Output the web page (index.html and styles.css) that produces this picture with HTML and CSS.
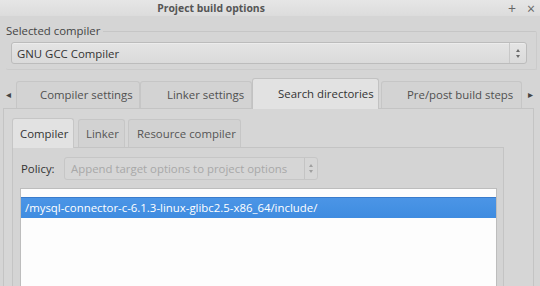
FILE: index.html
```html
<!DOCTYPE html>
<html lang="en">

<head>
  <meta charset="UTF-8" />
  <title>Project build options</title>
  <link rel="stylesheet" href="styles.css">
</head>

<body>
  <div class="window">
    <div class="titlebar">
      <span class="title">Project build options</span>
      <span class="wbtns"><span class="wbtn">+</span><span class="wbtn">×</span></span>
    </div>

    <div class="group">
      <div class="group-label">Selected compiler</div>
      <div class="combo main-combo">
        <span class="combo-text">GNU GCC Compiler</span>
        <span class="spin"><i class="up"></i><i class="down"></i></span>
      </div>
    </div>

    <div class="tabbar">
      <span class="scroll-arrow">◂</span>
      <div class="tab t1">Compiler settings</div>
      <div class="tab t2">Linker settings</div>
      <div class="tab t3 active">Search directories</div>
      <div class="tab t4">Pre/post build steps</div>
      <span class="scroll-arrow">▸</span>
    </div>

    <div class="pane">
      <div class="subtabs">
        <div class="subtab s1 active">Compiler</div>
        <div class="subtab s2">Linker</div>
        <div class="subtab s3">Resource compiler</div>
      </div>
      <div class="subpane">
        <div class="policy">
          <span class="policy-label">Policy:</span>
          <div class="combo disabled">
            <span class="combo-text">Append target options to project options</span>
            <span class="spin"><i class="up"></i><i class="down"></i></span>
          </div>
        </div>
        <div class="list">
          <div class="row selected">/mysql-connector-c-6.1.3-linux-glibc2.5-x86_64/include/</div>
        </div>
      </div>
    </div>
  </div>
</body>

</html>
```

FILE: styles.css
```css
body {
  margin: 0;
  background: #d5d5d5;
  font-family: 'Open Sans', 'Noto Sans', sans-serif;
  font-size: 11.4px;
  color: #3c3c3c;
  overflow: hidden;
}

.window {
  width: 540px;
  height: 286px;
  overflow: hidden;
}

.titlebar {
  height: 16px;
  background: linear-gradient(#e6e6e6, #dcdcdc);
  position: relative;
  text-align: center;
}

.title {
  display: inline-block;
  margin-left: -118px;
  font-weight: bold;
  font-size: 10.4px;
  color: #555;
  line-height: 14px;
}

.wbtns {
  position: absolute;
  right: 5px;
  top: -1px;
  display: flex;
  gap: 11px;
  color: #666;
  font-size: 14px;
}

.group {
  margin: 6px 3px 0 6px;
  position: relative;
  height: 48px;
}

.group::before {
  content: '';
  position: absolute;
  left: 0;
  right: 0;
  top: 9px;
  bottom: 0;
  border: 1px solid #cbcbcb;
  border-top-color: #c6c6c6;
  border-left: none;
  border-radius: 2px;
}

.group-label {
  position: relative;
  display: inline-block;
  background: #d5d5d5;
  padding-right: 3px;
  line-height: 18px;
  color: #444;
}

.combo {
  display: flex;
  align-items: center;
  border: 1px solid #bcbcbc;
  border-radius: 3px;
  background: linear-gradient(#e4e4e4, #dadada);
  box-shadow: inset 0 1px 0 #ececec;
}

.main-combo {
  position: relative;
  margin: 2px 10px 0 5px;
  height: 20px;
}

.combo-text {
  flex: 1;
  padding-left: 5px;
  color: #333;
  white-space: nowrap;
}

.spin {
  width: 16px;
  height: 100%;
  border-left: 1px solid #c8c8c8;
  display: flex;
  flex-direction: column;
  align-items: center;
  justify-content: center;
  gap: 3px;
}

.spin i {
  width: 0;
  height: 0;
  border-left: 2.5px solid transparent;
  border-right: 2.5px solid transparent;
}

.spin .up {
  border-bottom: 3px solid #6a6a6a;
}

.spin .down {
  border-top: 3px solid #6a6a6a;
}

.tabbar {
  display: flex;
  align-items: flex-end;
  height: 30px;
  margin-top: 8px;
  position: relative;
}

.scroll-arrow {
  width: 16px;
  align-self: center;
  text-align: center;
  font-size: 10px;
  color: #444;
  margin-top: 2px;
}

.tab {
  height: 26px;
  line-height: 26px;
  border: 1px solid #c6c6c6;
  border-bottom: none;
  border-radius: 3px 3px 0 0;
  background: #d3d3d3;
  color: #505050;
  white-space: nowrap;
}

.t1 {
  width: 99px;
  padding-left: 23px;
}

.t2 {
  width: 84px;
  padding-left: 26px;
}

.t3 {
  width: 100px;
  padding-left: 25px;
}

.t4 {
  width: 114px;
  padding-left: 25px;
  margin-left: 2px;
}

.tab.active {
  height: 30px;
  line-height: 30px;
  background: #e2e2e2;
  color: #333;
  border-color: #c2c2c2;
  margin-bottom: -1px;
  position: relative;
  z-index: 1;
}

.pane {
  margin: 0 6px 0 3px;
  border: 1px solid #c4c4c4;
  border-bottom: none;
  background: #d6d6d6;
  height: 180px;
  padding: 8px 29px 0 8px;
}

.subtabs {
  display: flex;
  align-items: flex-end;
  height: 30px;
  gap: 3px;
}

.subtab {
  height: 27px;
  line-height: 28px;
  padding-left: 7px;
  border: 1px solid #c6c6c6;
  border-bottom: none;
  border-radius: 3px 3px 0 0;
  background: #d2d2d2;
  color: #555;
  white-space: nowrap;
}

.s1 {
  width: 53px;
}

.s2 {
  width: 38px;
}

.s3 {
  width: 103px;
  padding-left: 8px;
}

.subtab.active {
  height: 29px;
  line-height: 30px;
  background: #e2e2e2;
  color: #333;
  margin-bottom: -1px;
  position: relative;
  z-index: 1;
  margin-right: 1px;
}

.subpane {
  border: 1px solid #c4c4c4;
  border-bottom: none;
  background: #d4d4d4;
  height: 150px;
  padding: 9px 6px 0 7px;
}

.policy {
  display: flex;
  align-items: center;
  height: 23px;
  gap: 9px;
}

.policy-label {
  width: 34px;
  padding-left: 1px;
  color: #333;
}

.combo.disabled {
  width: 252px;
  height: 21px;
  border-color: #c6c6c6;
  background: #d6d6d6;
  box-shadow: none;
}

.combo.disabled .combo-text {
  color: #a8a8a8;
  padding-left: 6px;
}

.combo.disabled .spin {
  width: 12px;
  border-left-color: #c4c4c4;
}

.combo.disabled .spin .up {
  border-bottom-color: #a0a0a0;
}

.combo.disabled .spin .down {
  border-top-color: #a0a0a0;
}

.list {
  margin-top: 8px;
  border: 1px solid #bdbdbd;
  border-bottom: none;
  background: #fdfdfd;
  height: 120px;
  padding: 8px 0 0 0;
}

.row {
  height: 20px;
  line-height: 20px;
  padding-left: 4px;
  white-space: nowrap;
}

.row.selected {
  background: linear-gradient(#4b95e6, #3f8ce0);
  border-top: 1px solid #3a7ccc;
  color: #fff;
}
```
